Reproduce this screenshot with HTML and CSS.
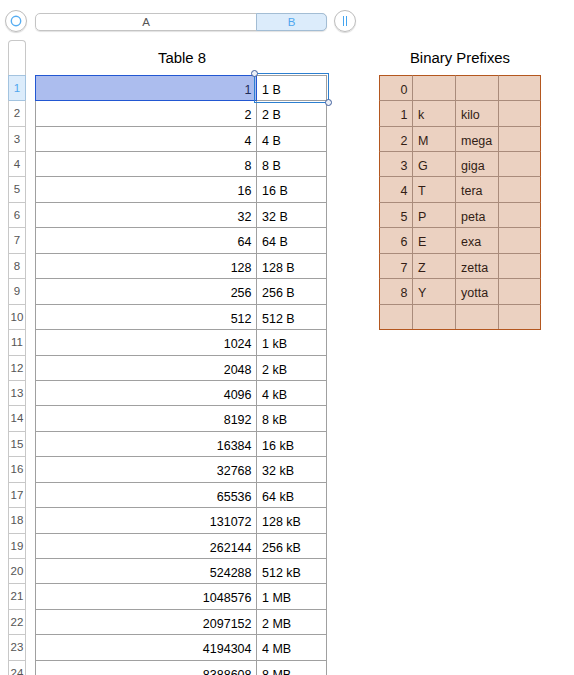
FILE: index.html
```html
<!DOCTYPE html>
<html lang="en">
<head>
<meta charset="utf-8">
<title>Table 8</title>
<link rel="stylesheet" href="styles.css">
</head>
<body>
<header class="columns">
  <div class="knob"><svg width="12" height="12" viewBox="0 0 12 12"><circle cx="6" cy="6" r="4.7" fill="none" stroke="#56adf2" stroke-width="1.4"/></svg></div>
  <div class="bar"><span class="col-a">A</span><span class="col-b">B</span></div>
  <div class="knob"><svg width="12" height="12" viewBox="0 0 12 12"><path d="M4.5 1v10M7.5 1v10" stroke="#45a5f0" stroke-width="1"/></svg></div>
</header>
<main class="sheet">
  <div class="gutter">
    <div class="gutter-head"></div>
    <div class="num active">1</div><div class="num">2</div><div class="num">3</div><div class="num">4</div>
    <div class="num">5</div><div class="num">6</div><div class="num">7</div><div class="num">8</div>
    <div class="num">9</div><div class="num">10</div><div class="num">11</div><div class="num">12</div>
    <div class="num">13</div><div class="num">14</div><div class="num">15</div><div class="num">16</div>
    <div class="num">17</div><div class="num">18</div><div class="num">19</div><div class="num">20</div>
    <div class="num">21</div><div class="num">22</div><div class="num">23</div><div class="num">24</div>
  </div>
  <section class="values">
    <h2>Table 8</h2>
    <div class="grid">
      <div class="row"><span class="marked">1</span><span class="current">1 B<i class="selection"></i></span></div>
      <div class="row"><span>2</span><span>2 B</span></div>
      <div class="row"><span>4</span><span>4 B</span></div>
      <div class="row"><span>8</span><span>8 B</span></div>
      <div class="row"><span>16</span><span>16 B</span></div>
      <div class="row"><span>32</span><span>32 B</span></div>
      <div class="row"><span>64</span><span>64 B</span></div>
      <div class="row"><span>128</span><span>128 B</span></div>
      <div class="row"><span>256</span><span>256 B</span></div>
      <div class="row"><span>512</span><span>512 B</span></div>
      <div class="row"><span>1024</span><span>1 kB</span></div>
      <div class="row"><span>2048</span><span>2 kB</span></div>
      <div class="row"><span>4096</span><span>4 kB</span></div>
      <div class="row"><span>8192</span><span>8 kB</span></div>
      <div class="row"><span>16384</span><span>16 kB</span></div>
      <div class="row"><span>32768</span><span>32 kB</span></div>
      <div class="row"><span>65536</span><span>64 kB</span></div>
      <div class="row"><span>131072</span><span>128 kB</span></div>
      <div class="row"><span>262144</span><span>256 kB</span></div>
      <div class="row"><span>524288</span><span>512 kB</span></div>
      <div class="row"><span>1048576</span><span>1 MB</span></div>
      <div class="row"><span>2097152</span><span>2 MB</span></div>
      <div class="row"><span>4194304</span><span>4 MB</span></div>
      <div class="row"><span>8388608</span><span>8 MB</span></div>
    </div>
  </section>
  <section class="prefixes">
    <h2>Binary Prefixes</h2>
    <div class="grid">
      <div class="row"><span>0</span><span></span><span></span><span></span></div>
      <div class="row"><span>1</span><span>k</span><span>kilo</span><span></span></div>
      <div class="row"><span>2</span><span>M</span><span>mega</span><span></span></div>
      <div class="row"><span>3</span><span>G</span><span>giga</span><span></span></div>
      <div class="row"><span>4</span><span>T</span><span>tera</span><span></span></div>
      <div class="row"><span>5</span><span>P</span><span>peta</span><span></span></div>
      <div class="row"><span>6</span><span>E</span><span>exa</span><span></span></div>
      <div class="row"><span>7</span><span>Z</span><span>zetta</span><span></span></div>
      <div class="row"><span>8</span><span>Y</span><span>yotta</span><span></span></div>
      <div class="row"><span></span><span></span><span></span><span></span></div>
    </div>
  </section>
</main>
</body>
</html>
```
FILE: styles.css
```css
*, *::before, *::after { box-sizing: border-box; }

html, body { height: 100%; }

body {
  --row: 25.4375px;
  margin: 0;
  overflow: hidden;
  background: #fff;
  color: #000;
  font-family: "Liberation Sans", Arial, sans-serif;
  font-size: 12.5px;
}

.columns {
  display: flex;
  align-items: center;
  height: 40px;
  padding: 2px 0 0 5px;
}

.knob {
  display: flex;
  align-items: center;
  justify-content: center;
  width: 22px;
  height: 22px;
  border: 1px solid #bcbcbc;
  border-radius: 50%;
  box-shadow: 0 1px 1px rgba(0, 0, 0, .15);
}

.bar {
  display: flex;
  width: 292px;
  height: 18px;
  margin: 2px 7px 0 8px;
  border: 1px solid #c4c4c4;
  border-radius: 5px;
  box-shadow: 0 1px 1px rgba(0, 0, 0, .12);
  font-size: 11.5px;
  line-height: 16px;
  text-align: center;
  color: #555;
}

.col-a { width: 220px; }

.col-b {
  height: 18px;
  margin: -1px -1px 0 0;
  flex: 1;
  border: 1px solid #a3bdd4;
  border-radius: 0 5px 5px 0;
  background: #dcecfb;
  color: #4fa6ee;
}

.sheet { display: flex; align-items: flex-start; }

.gutter {
  width: 18px;
  margin-left: 8px;
  font-size: 11.5px;
  text-align: center;
  color: #555;
}

.gutter-head {
  height: 34.72px;
  border: 1px solid #c8c8c8;
  border-bottom: 0;
  border-radius: 4px 4px 0 0;
}

.num {
  height: var(--row);
  border: 1px solid #c8c8c8;
  border-bottom: 0;
  line-height: 25px;
}

.num.active {
  border-color: #a3c3df;
  background: #dcecfb;
  color: #4fa6ee;
}

.num.active + .num { border-top-color: #a3c3df; }

h2 {
  height: 34.72px;
  margin: 0;
  font-size: 14.9px;
  font-weight: 400;
  line-height: 36px;
  text-align: center;
  white-space: nowrap;
  color: #000;
}

.values { width: 292px; margin-left: 9px; }

.values h2 { padding-left: 2px; }

.prefixes { width: 162px; margin-left: 52px; }

.row {
  display: grid;
  grid-template-rows: 100%;
  height: var(--row);
}

.row span {
  border-top: 1px solid #a0a0a0;
  border-left: 1px solid #a0a0a0;
  padding: 0 5px;
  line-height: 28px;
  white-space: pre;
}

.row span:first-child { padding-right: 4.5px; text-align: right; }

.row span:last-child { border-right: 1px solid #a0a0a0; }

.values .row { grid-template-columns: 221px 71px; }

.row .marked {
  position: relative;
  z-index: 1;
  margin-right: -1px;
  margin-bottom: -1px;
  border: 1px solid #2257d2;
  background: #acbdee;
  color: #202b58;
}

.row .current { position: relative; z-index: 2; border-left-color: #2257d2; }

.selection {
  position: absolute;
  top: -3px;
  left: -3px;
  width: 75px;
  height: 30px;
  border: 1px solid #2c7fd0;
}

.selection::before,
.selection::after {
  content: "";
  position: absolute;
  width: 7px;
  height: 7px;
  border: 1px solid #405f9c;
  border-radius: 50%;
  background: #edf1f8;
}

.selection::before { top: -4px; left: -4px; }

.selection::after { right: -4px; bottom: -4px; }

.prefixes .row { grid-template-columns: 33px 43px 43px 43px; color: #321d15; }

.prefixes .grid { background: #ebd1c1; border-bottom: 1px solid #b4571f; }

.prefixes .row span { border-color: #a98b7b; }

.prefixes .row:first-child span { border-top-color: #b4571f; }

.prefixes .row span:first-child { border-left-color: #b4571f; }

.prefixes .row span:last-child { border-right-color: #b4571f; }
```
